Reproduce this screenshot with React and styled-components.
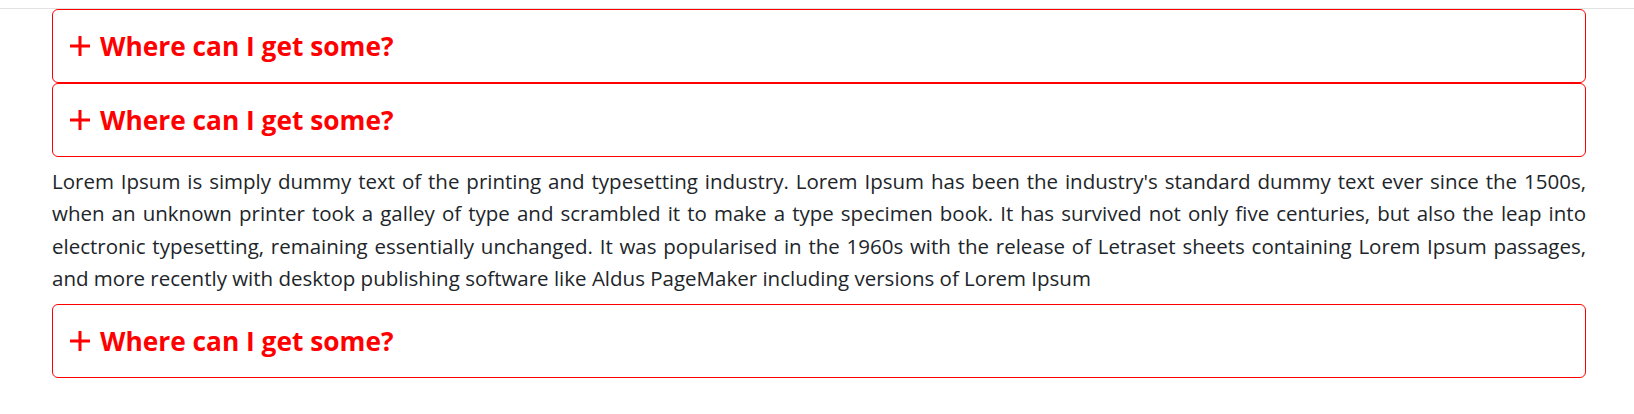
import React from "react";
import styled, { createGlobalStyle } from "styled-components";

const GlobalStyle = createGlobalStyle`
  html, body { margin: 0; padding: 0; background: #ffffff; }
  body { font-family: "Open Sans", "Noto Sans", "Liberation Sans", sans-serif; color: #212529; }
  * { box-sizing: border-box; }
`;

const TopRule = styled.div`
  margin-top: 8px;
  border-top: 1px solid #e2e2e2;
`;

const Wrapper = styled.div`
  padding: 0 48px 0 52px;
  display: flex;
  flex-direction: column;
`;

const Item = styled.div`
  border: 1px solid #ff0000;
  border-radius: 6px;
`;

const Header = styled.button`
  display: flex;
  align-items: center;
  gap: 9px;
  width: 100%;
  height: 72px;
  padding: 0 16px;
  border: none;
  background: transparent;
  color: #ff0000;
  font-family: "Open Sans", "Noto Sans", sans-serif;
  font-weight: 700;
  font-size: 26.3px;
  cursor: pointer;
  text-align: left;
`;

const Panel = styled.p`
  margin: 0;
  padding: 8px 0 10px;
  font-size: 20.5px;
  line-height: 32.3px;
  text-align: justify;
  color: #212529;
`;

const PlusIcon = () => (
  <svg width="22" height="22" viewBox="0 0 22 22" aria-hidden="true">
    <path d="M11 1v20M1 11h20" stroke="#ff0000" strokeWidth="3" fill="none" />
  </svg>
);

const text =
  "Lorem Ipsum is simply dummy text of the printing and typesetting industry. Lorem Ipsum has been the industry's standard dummy text ever since the 1500s, when an unknown printer took a galley of type and scrambled it to make a type specimen book. It has survived not only five centuries, but also the leap into electronic typesetting, remaining essentially unchanged. It was popularised in the 1960s with the release of Letraset sheets containing Lorem Ipsum passages, and more recently with desktop publishing software like Aldus PageMaker including versions of Lorem Ipsum";

const items = [
  { id: 1, open: false },
  { id: 2, open: true },
  { id: 3, open: false },
];

export default function App() {
  return (
    <>
      <GlobalStyle />
      <TopRule />
      <Wrapper>
        {items.map((it) => (
          <React.Fragment key={it.id}>
            <Item>
              <Header>
                <PlusIcon />
                <span>Where can I get some?</span>
              </Header>
            </Item>
            {it.open && <Panel>{text}</Panel>}
          </React.Fragment>
        ))}
      </Wrapper>
    </>
  );
}
